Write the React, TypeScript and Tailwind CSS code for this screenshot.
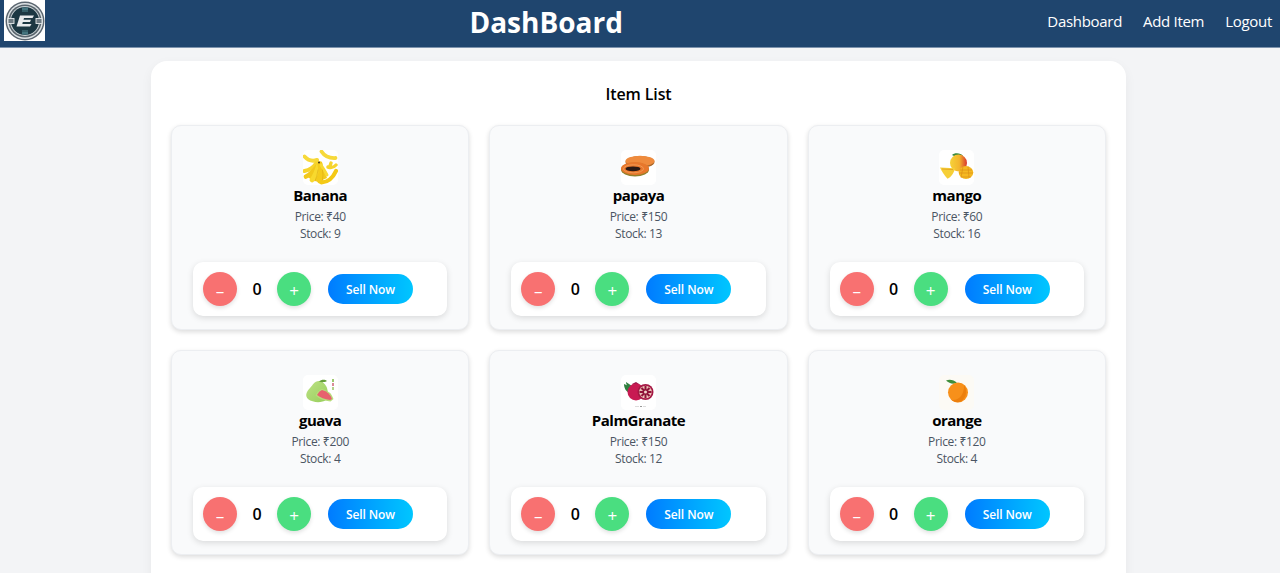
import React from "react";

const Logo = () => (
  <div className="w-[41px] h-[41px] bg-white flex items-center justify-center">
    <svg width="40" height="40" viewBox="0 0 40 40">
      <circle cx="20" cy="20" r="19.5" fill="#5b6670" />
      <circle cx="20" cy="20" r="18" fill="#dfe4e6" />
      <circle cx="20" cy="20" r="16.600" fill="#59656d" />
      <circle cx="20" cy="20" r="15" fill="#ccd3d6" />
      <circle cx="20" cy="20" r="14" fill="#1c3742" />
      <path d="M17 8h6M18 6v5M20 6v5M22 6v5M17 32h6M18 29v5M20 29v5M22 29v5" stroke="#5d9aa3" strokeWidth=".8" fill="none" />
      <rect x="3" y="17.500" width="6" height="5" fill="#6d7a82" stroke="#e6eaec" strokeWidth=".9" />
      <rect x="31" y="17.500" width="6" height="5" fill="#6d7a82" stroke="#e6eaec" strokeWidth=".9" />
      <path d="M15 14.500H29L27.500 17H19L18.500 18.800H26L25 21H17.800L17.300 23H26.500L25 25.500H11.500z" fill="#e8eaec" />
    </svg>
  </div>
);

const Thumb = ({ children }: { children: React.ReactNode }) => (
  <svg width="35" height="35" viewBox="0 0 35 35" className="rounded-[5px] bg-white">
    {children}
  </svg>
);

const Banana = () => (
  <Thumb>
    <path d="M16 13.500L3 25.500L8 29.500L15 32L24 28L20 18z" fill="#f3cb1c" />
    <g fill="none" strokeLinecap="round">
      <path d="M1.500 6.500Q7 12.500 14 10" stroke="#f7d93a" strokeWidth="4" />
      <path d="M18.500 1.500Q23 8.500 32.500 8" stroke="#f7d93a" strokeWidth="3.800" />
      <path d="M25 17Q30 18.500 33 15M28 13L27 16" stroke="#f6d42e" strokeWidth="3.400" />
      <path d="M1.500 21Q9 19.500 13 13.500" stroke="#f6d42c" strokeWidth="4" />
      <path d="M16 14Q9 24 3 26.500" stroke="#f2c81c" strokeWidth="4.600" />
      <path d="M16 14Q13 25 9 30" stroke="#f8d92e" strokeWidth="4.800" />
      <path d="M17 14Q19 24 17 31" stroke="#f4cb1c" strokeWidth="5.200" />
      <path d="M18 15Q22 21 24 25" stroke="#f8da34" strokeWidth="3" />
      <path d="M18.500 32.500Q28 32 33 21" stroke="#f4c916" strokeWidth="4.200" />
      <path d="M12 31Q14 27 15 20M19.500 30Q20.500 25 19.500 20" stroke="#d7a416" strokeWidth=".5" />
    </g>
    <circle cx="16" cy="12.500" r="1" fill="#43341a" />
  </Thumb>
);

const Papaya = () => (
  <Thumb>
    <ellipse cx="19" cy="12" rx="14.500" ry="6" fill="#a9682a" />
    <ellipse cx="19" cy="11" rx="14.500" ry="5.200" fill="#ef8b3d" />
    <ellipse cx="14" cy="19.500" rx="14" ry="7" fill="#93802c" />
    <ellipse cx="14" cy="18.500" rx="14" ry="6.400" fill="#e8772c" />
    <ellipse cx="12" cy="18.800" rx="7.500" ry="2.400" fill="#2b1a15" />
    <ellipse cx="12.500" cy="18.800" rx="10" ry="4" fill="none" stroke="#f3a25e" strokeWidth=".8" />
  </Thumb>
);

const Mango = () => (
  <Thumb>
    <defs>
      <linearGradient id="mg" x1="0" x2="1" y1="0" y2="0">
        <stop offset="0" stopColor="#f6d23a" />
        <stop offset=".55" stopColor="#f3b52d" />
        <stop offset="1" stopColor="#d9362d" />
      </linearGradient>
    </defs>
    <path d="M13 5c2-2.500 9-2.500 11 1-3 .8-8 .8-11-1z" fill="#3c8a3d" />
    <ellipse cx="19.500" cy="13" rx="8.500" ry="8.500" fill="url(#mg)" />
    <path d="M1 17.500l15 .8c-1 5-4 9-7.500 10.500C6 26 3 22 1 17.500z" fill="#f6cf38" />
    <path d="M3 19l11 .6" stroke="#e7a823" strokeWidth="1" />
    <ellipse cx="27" cy="22.500" rx="7.300" ry="6.500" fill="#f5b922" />
    <path d="M21 20h12M20 23h14M22 27h10M24 16.500l-2 11M29 16.500l1 11" stroke="#dd8f14" strokeWidth=".7" />
  </Thumb>
);

const Guava = () => (
  <Thumb>
    <defs>
      <linearGradient id="gv" x1="0" x2="1" y1="0" y2="1">
        <stop offset="0" stopColor="#bde184" />
        <stop offset="1" stopColor="#97cf5c" />
      </linearGradient>
    </defs>
    <path d="M16 6c-5 0-6 4-9 7-4 4-5 8-2 11 5 4 14 4 18 1 3-3 2-8 1-12-1-3-4-7-8-7z" fill="url(#gv)" />
    <path d="M16 6.500c2-2 6-2.500 8-.5-2 1.500-6 1.500-8 .5z" fill="#659e3a" />
    <path d="M19 14Q28 16 30.500 24L27.500 26.500Q18 25.500 12.500 20.500Q15 15 19 14z" fill="#b7dc7a" />
    <path d="M19 15Q26.500 17 29 24L27 25Q19 24 14 20Q16 16 19 15z" fill="#e7626e" />
    <rect x="29" y="4" width="2" height="3" fill="#9fca72" />
    <rect x="29" y="8" width="2" height="3" fill="#d98a98" />
    <rect x="29" y="12" width="2" height="3" fill="#b5d08d" />
  </Thumb>
);

const Pomegranate = () => (
  <Thumb>
    <path d="M3 9l7 3-1 6C5 17 3 13 3 9zM5 7l6 4-3 1C6 11 5 9 5 7z" fill="#2f8040" />
    <path d="M11 9l4-2 3 2-3 2z" fill="#96194a" />
    <circle cx="15" cy="17" r="8.500" fill="#c81a52" />
    <circle cx="24.500" cy="17" r="8" fill="#a61845" />
    <circle cx="24.500" cy="17" r="6.300" fill="#ecc4b8" />
    <path d="M24.500 11v12M18.500 17h12M20.500 13l8 8M28.500 13l-8 8" stroke="#8f1239" strokeWidth="2" />
    <circle cx="24.500" cy="17" r="1.500" fill="#f2d7cc" />
    <rect x="14" y="31" width="4" height="1" fill="#dcdcdc" />
    <rect x="19" y="31" width="2" height="1" fill="#999" />
    <rect x="22" y="31" width="3" height="1" fill="#dcdcdc" />
  </Thumb>
);

const Orange = () => (
  <svg width="35" height="35" viewBox="0 0 35 35" className="rounded-[5px] bg-[#fcfaf5]">
    <path d="M7 5.500c4-1.500 8-.5 11 2.500-4 1.500-8 .5-11-2.500z" fill="#3f8e3a" />
    <circle cx="19" cy="17.500" r="10" fill="#f7901a" />
    <path d="M25 10c3.500 5 3 12-3 16.500-4 1.500-7 .5-9.500-1.500 7 1 13-5 12.500-15z" fill="#ec7f0c" />
  </svg>
);

const items = [
  { name: "Banana", price: 40, stock: 9, icon: <Banana /> },
  { name: "papaya", price: 150, stock: 13, icon: <Papaya /> },
  { name: "mango", price: 60, stock: 16, icon: <Mango /> },
  { name: "guava", price: 200, stock: 4, icon: <Guava /> },
  { name: "PalmGranate", price: 150, stock: 12, icon: <Pomegranate /> },
  { name: "orange", price: 120, stock: 4, icon: <Orange /> },
];

const Card = ({ item }: { item: (typeof items)[number] }) => (
  <div className="h-[205px] rounded-[10px] border border-[#eceef1] bg-[#f9fafb] px-[21px] pt-[24px] flex flex-col items-center shadow-[0_2px_5px_rgba(0,0,0,0.14)]">
    {item.icon}
    <h3 className="text-[15px] leading-[21px] font-bold tracking-[-0.5px] text-black">{item.name}</h3>
    <p className="mt-[2px] text-[12px] leading-[17px] tracking-[-0.35px] text-[#4b5563]">Price: ₹{item.price}</p>
    <p className="text-[12px] leading-[17px] tracking-[-0.35px] text-[#4b5563]">Stock: {item.stock}</p>
    <div className="mt-[20px] w-full h-[54px] rounded-[10px] bg-white flex items-center px-[10px] shadow-[0_2px_6px_rgba(0,0,0,0.13)]">
      <button className="w-[34px] h-[34px] rounded-full bg-[#f87171] text-white text-[17px] flex items-center justify-center pt-[3px] shadow-[0_2px_4px_rgba(0,0,0,0.12)]">–</button>
      <span className="w-[40px] text-center text-[16px] font-semibold text-black">0</span>
      <button className="w-[34px] h-[34px] rounded-full bg-[#4ade80] text-white text-[17px] flex items-center justify-center pt-[3px] shadow-[0_2px_4px_rgba(0,0,0,0.12)]">+</button>
      <button className="ml-[17px] w-[85px] h-[30px] rounded-full bg-gradient-to-r from-[#007bff] to-[#00c6ff] text-white text-[12px] font-semibold tracking-[-0.1px] flex items-center justify-center pt-[1px]">Sell Now</button>
    </div>
  </div>
);

export default function App() {
  return (
    <div className="h-[573px] overflow-hidden bg-[#f3f4f6] font-['Open_Sans','Noto_Sans',sans-serif]">
      <header className="h-[48px] bg-[#1f456e] border-b border-[#7d93ad] flex items-start justify-between pl-[4px] pr-[8px]">
        <Logo />
        <h1 className="text-[28px] leading-[44px] font-bold text-white">DashBoard</h1>
        <nav className="flex gap-[21px] h-[42px] items-center text-[15px] tracking-[-0.3px] text-white">
          <a>Dashboard</a>
          <a>Add Item</a>
          <a>Logout</a>
        </nav>
      </header>
      <main className="mt-[13px] ml-[151px] w-[975px] rounded-[16px] bg-white px-[20px] pt-[20px] pb-[60px] shadow-[0_4px_12px_rgba(0,0,0,0.05)]">
        <h2 className="text-center text-[16px] leading-[27px] font-semibold tracking-[-0.1px] text-black mb-[17px]">Item List</h2>
        <div className="grid grid-cols-3 gap-x-[20px] gap-y-[20px]">
          {items.map((item) => (
            <Card key={item.name} item={item} />
          ))}
        </div>
      </main>
    </div>
  );
}
